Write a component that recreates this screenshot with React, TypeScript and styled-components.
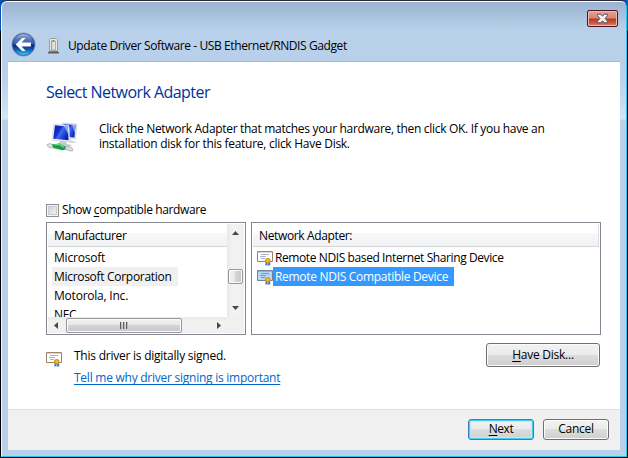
import React from 'react';
import styled, { createGlobalStyle, css } from 'styled-components';

const Global = createGlobalStyle`
  html, body { margin: 0; padding: 0; background: #000; overflow: hidden; }
  * { box-sizing: border-box; }
  #root { font-family: "Open Sans", "Noto Sans", sans-serif; font-size: 12px; line-height: 18px; color: #000; }
  svg { display: block; }
`;

const Desktop = styled.div`
  width: 628px; height: 458px; padding: 1px;
  background: linear-gradient(#0754b8 0, #0754b8 30px, #000 31px);
`;
const Window = styled.div`
  width: 626px; height: 456px;
  display: flex; flex-direction: column;
  border: 1px solid #fff;
  border-right-color: #27c4ee; border-bottom-color: #27c4ee;
  border-left-color: #f3f8fc;
  border-radius: 6px 6px 0 0;
  padding: 0 6px 6px;
  background: linear-gradient(#9ab3d1 0, #b8d0e8 27px, #b9d0ea 28px, #b9d0ea 72px, #c9def1 105px, #d4e6f6 116px, #b9d0ea 119px);
  box-shadow: 0 -1px 0 #2c2a35;
`;
const Header = styled.header`
  height: 60px; flex: none; margin: 0;
  display: flex; flex-direction: column;
  border-bottom: 1px solid #a5bad7;
`;
const CaptionRow = styled.div`
  height: 27px; display: flex; justify-content: flex-end; padding: 8px 2px 0 0;
`;
const CloseButton = styled.button`
  width: 31px; height: 17px; padding: 0;
  display: flex; align-items: center; justify-content: center;
  border: 1px solid #4d1525; border-radius: 2px;
  box-shadow: inset 0 0 0 1px #f0b9ae;
  background: linear-gradient(#e5a397 0, #d98575 7px, #b83a22 8px, #c65a43 12px, #dc8c78 100%);
`;
const TitleRow = styled.div`
  height: 32px; display: flex; align-items: flex-start; padding: 3px 0 0 3px;
`;
const DeviceSlot = styled.div`margin: 6px 9px 0 12px;`;
const Caption = styled.div`margin-top: 5px;`;

const Text = styled.span<{ $spacing?: number }>`
  white-space: pre; letter-spacing: ${p => p.$spacing ?? -0.3}px;
`;
const Key = styled.span`
  text-decoration: underline; text-decoration-thickness: 1px; text-underline-offset: 2px; text-decoration-skip-ink: none;
`;
const Page = styled.main`
  width: 612px; height: 347px; flex: none; background: #fff;
  padding: 19px 19px 0 38px; display: flex; flex-direction: column;
`;
const Heading = styled.h1`
  margin: 0; height: 22px; font-size: 16px; line-height: 22px; font-weight: 400;
  color: #003399;
`;
const Intro = styled.section`
  display: flex; height: 90px; padding-top: 18px;
`;
const IntroText = styled.div`
  display: flex; flex-direction: column; margin-left: 20px; line-height: 15px;
`;
const Check = styled.label`
  display: flex; align-items: center; height: 18px; gap: 3px; margin-top: 8px;
`;
const Box = styled.span`
  width: 13px; height: 13px; border: 1px solid #8e8f8f; flex: none;
  background: linear-gradient(135deg, #cbcfd5, #f6f6f6);
  box-shadow: inset 0 0 0 1px #f4f4f4, inset 0 0 0 2px #c8cbd0;
`;
const Lists = styled.div`
  display: flex; gap: 5px; height: 113px; margin-top: 3px;
`;
const ListFrame = styled.div<{ $width: number }>`
  width: ${p => p.$width}px; height: 113px; border: 1px solid #828790; padding: 1px;
  display: flex; flex-direction: column; background: #fff;
`;
const Upper = styled.div`display: flex; height: 93px; flex: none;`;
const Column = styled.div`flex: 1; min-width: 0; overflow: hidden;`;
const ColumnHead = styled.div<{ $divider?: boolean }>`
  height: 23px; padding: 3px 0 0 6px; line-height: 18px;
  background: linear-gradient(#fff 0, #fff 9px, #f7f8fa 9px, #f1f2f4 100%);
  border-bottom: 1px solid #d5d5d5;
  ${p => p.$divider && css`border-right: 1px solid #dedfe1;`}
`;
const Rows = styled.div`padding: 1px 0 0 4px;`;
const Row = styled.div<{ $shaded?: boolean }>`
  height: 19px; width: 126px; padding-left: 2px; line-height: 19px;
  background: ${p => (p.$shaded ? '#f0f0f0' : 'transparent')};
`;
const DeviceRow = styled.div`
  height: 19px; display: flex; align-items: center;
`;
const DeviceName = styled.div<{ $selected?: boolean }>`
  height: 19px; line-height: 19px; padding: 0 6px 0 2px;
  ${p => p.$selected && css`
    background: #3399ff; color: #fff; outline: 1px dotted #c77826; outline-offset: -1px; width: 181px;
  `}
`;
const VBar = styled.div`
  width: 17px; height: 93px; flex: none; background: linear-gradient(90deg, #e9e9e9, #f2f2f2 30%, #f0f0f0);
  display: flex; flex-direction: column; align-items: center;
`;
const HBar = styled.div`
  height: 16px; width: 179px; background: linear-gradient(#e9e9e9, #f2f2f2 30%, #f0f0f0);
  display: flex; align-items: center;
`;
const LowerBar = styled.div`height: 16px; background: #f0f0f0;`;
const Arrow = styled.div<{ $w: number; $h: number; $lead?: number }>`
  width: ${p => p.$w}px; height: ${p => p.$h}px; flex: none;
  margin-left: ${p => p.$lead ?? 0}px;
  display: flex; align-items: center; justify-content: center;
`;
const VThumb = styled.div`
  width: 15px; height: 15px; margin-top: 28px; margin-bottom: 15px; flex: none; border: 1px solid #979797; border-radius: 2px;
  box-shadow: inset 0 0 0 1px #fafafa;
  background: linear-gradient(90deg, #f3f3f3 0, #e6e6e7 50%, #d3d4d7 50%, #c6c7ca 100%);
`;
const HThumb = styled.div`
  width: 116px; height: 15px; margin-left: 2px; border: 1px solid #979797; border-radius: 2px;
  display: flex; align-items: center; justify-content: center; gap: 1px;
  box-shadow: inset 0 0 0 1px #fafafa;
  background: linear-gradient(#f3f3f3 0, #e6e6e7 50%, #d3d4d7 50%, #c6c7ca 100%);
`;
const Grip = styled.i`
  width: 2px; height: 7px; background: linear-gradient(90deg, #5c5d60 50%, #b8b8ba 50%);
`;
const Signing = styled.section`
  display: flex; justify-content: space-between; align-items: flex-start; padding: 8px 1px 0 0;
`;
const SignInfo = styled.div`display: flex;`;
const SignIcon = styled.div`width: 28px; padding-top: 8px;`;
const SignText = styled.div`display: flex; flex-direction: column; gap: 4px; padding-top: 4px;`;
const Link = styled.a`
  color: #0066cc; height: 18px; text-decoration: underline; text-decoration-thickness: 1px; text-underline-offset: 2px; text-decoration-skip-ink: none;
`;
const Button = styled.button<{ $width: number; $height: number; $primary?: boolean }>`
  width: ${p => p.$width}px; height: ${p => p.$height}px; padding: 0 0 1px;
  font: inherit; line-height: 18px; color: #000; border-radius: 3px;
  border: 1px solid ${p => (p.$primary ? '#3c7fb1' : '#707070')};
  box-shadow: ${p => (p.$primary ? 'inset 0 0 0 1px #43cdf2, inset 0 0 1px 2px #bdebf8' : 'inset 0 0 0 1px #fbfbfb')};
  background: linear-gradient(#f2f2f2 0, #ebebeb 49%, #dddddd 50%, #cfcfcf 100%);
`;
const Footer = styled.footer`
  height: 41px; flex: none; background: #f0f0f0; border-top: 1px solid #dfdfdf;
  display: flex; justify-content: flex-end; gap: 9px; padding: 9px 11px 0 0;
`;

const CloseGlyph = () => (
  <svg width="13" height="11" viewBox="0 0 13 11">
    <path d="M1.5 1.2h3.2l1.8 2 1.8-2h3.2v1.5L9 5.5l2.5 2.8v1.5H8.3l-1.8-2-1.8 2H1.5V8.3L4 5.5 1.5 2.7z" fill="#f2f2f2" stroke="#535569" strokeWidth="1" />
  </svg>
);

const BackIcon = () => (
  <svg width="25" height="25" viewBox="0 0 25 25">
    <defs>
      <linearGradient id="orbTop" x1="0" y1="0" x2="0" y2="1">
        <stop offset="0" stopColor="#a9bddd" /><stop offset=".25" stopColor="#5779bd" />
        <stop offset=".49" stopColor="#3359aa" /><stop offset=".51" stopColor="#03246f" />
        <stop offset=".72" stopColor="#0a5ab5" /><stop offset="1" stopColor="#46d0ff" />
      </linearGradient>
    </defs>
    <circle cx="12.5" cy="12.5" r="12" fill="#8499b9" />
    <circle cx="12.5" cy="12.5" r="11.4" fill="#c3d5ea" />
    <circle cx="12.5" cy="12.5" r="11" fill="url(#orbTop)" stroke="#20458c" strokeWidth=".8" />
    <path d="M4.6 12.5l6.5-6.4h3.6l-4.2 4.5h9.4v3.8h-9.4l4.2 4.5h-3.6z" fill="#fff" />
  </svg>
);

const DeviceIcon = () => (
  <svg width="11" height="16" viewBox="0 0 11 16">
    <path d="M1.5 1.5l1-1h6l1 1V13h-8z" fill="#e8e8e4" stroke="#9b9d9b" />
    <path d="M3.5 3h3.8v9H3.5z" fill="#f7f7f5" stroke="#8a8c8a" strokeWidth=".8" />
    <path d="M5 2v9" stroke="#c2cbbb" />
    <circle cx="5.2" cy="3" r="1" fill="#52a33a" />
    <path d="M1 13h9v1H1z" fill="#777" /><path d="M0 14h11v1.5H0z" fill="#5d5e5e" />
  </svg>
);

const NetworkIcon = () => (
  <svg width="33" height="32" viewBox="0 0 33 32">
    <defs>
      <linearGradient id="screen" x1="0" y1="0" x2="1" y2=".6">
        <stop offset="0" stopColor="#0c20a8" /><stop offset=".45" stopColor="#1531cf" />
        <stop offset=".55" stopColor="#3e6cf0" /><stop offset="1" stopColor="#0b22b8" />
      </linearGradient>
    </defs>
    <path d="M22 19l5 1 4 1-4 1-6-1z" fill="#cfd3d6" />
    <path d="M16 2l15 1-1.5 15L17 17z" fill="#e3e7ef" stroke="#b7c0d0" strokeWidth=".5" />
    <path d="M17.5 3.2l12.2.8-1.3 12.5-10-1z" fill="url(#screen)" />
    <path d="M26 3.8l3.7.2-.8 8z" fill="#b0cbf9" opacity=".7" />
    <path d="M14 20h6l1 3 5 1-3 2-11-2z" fill="#c7cbd0" />
    <path d="M8 3l15 1.5L24 21 6 19z" fill="#edf0f5" stroke="#bcc4d2" strokeWidth=".5" />
    <path d="M9 4.3l12.8 1.3.8 13.7L7.3 17.7z" fill="url(#screen)" />
    <path d="M18 5.3l3.8.3.6 8z" fill="#b0cbf9" opacity=".7" />
    <path d="M1 23.5q3-2 6 .2l6 .7-1.5 3.8-6-1.4Q1.5 27 1 23.5z" fill="#dfe3e3" stroke="#959e9e" strokeWidth=".6" />
    <path d="M6 23.6l7-1.2 7 3.3 1.5 2.5-5.5 1-9-2.8z" fill="#159c45" />
    <path d="M8 24l5-.6 5 2.7" stroke="#6bdc87" strokeWidth="1.2" fill="none" />
    <path d="M20 25.5l5 .5q2.2 1.2 1.5 4l-3.5-.2-4-1.6z" fill="#d8dddd" stroke="#959e9e" strokeWidth=".6" />
  </svg>
);

const Certificate = ({ tinted = false }: { tinted?: boolean }) => (
  <svg width="16" height="16" viewBox="0 0 16 16">
    <path d="M.5 1.5h15v10H.5z" fill={tinted ? '#b7d8f6' : '#fff'} stroke={tinted ? '#6a869b' : '#9b8467'} />
    <path d="M1 2.5h14" stroke={tinted ? '#92b5d2' : '#e2d8c8'} strokeWidth="1" />
    <path d="M4 4.5h8M3 6.5h6M4 8.5h4" stroke={tinted ? '#6a9bd5' : '#a5b1d6'} />
    <path d="M8.5 12h2v4l-1-1-1 .7zM11.2 12h2v3.7l-1-.7-1 1z" fill="#2868d8" />
    <circle cx="10.7" cy="10.7" r="2.8" fill="#d79a16" />
    <circle cx="10.7" cy="10.5" r="1.2" fill="#f3c343" />
  </svg>
);

const paths = { up: 'M0 4L3.5 0 7 4z', down: 'M0 0h7L3.5 4z', left: 'M4 0v7L0 3.5z', right: 'M0 0l4 3.5L0 7z' };
const Triangle = ({ dir }: { dir: keyof typeof paths }) => {
  const vertical = dir === 'up' || dir === 'down';
  return (
    <svg width={vertical ? 7 : 4} height={vertical ? 4 : 7}>
      <path d={paths[dir]} fill="#45474b" />
    </svg>
  );
};

export default function App() {
  return (
    <>
      <Global />
      <Desktop>
        <Window>
          <Header>
            <CaptionRow><CloseButton aria-label="Close"><CloseGlyph /></CloseButton></CaptionRow>
            <TitleRow>
              <BackIcon />
              <DeviceSlot><DeviceIcon /></DeviceSlot>
              <Caption><Text $spacing={-0.4}>Update Driver Software - USB Ethernet/RNDIS Gadget</Text></Caption>
            </TitleRow>
          </Header>
          <Page>
            <Heading><Text $spacing={-0.55}>Select Network Adapter</Text></Heading>
            <Intro>
              <NetworkIcon />
              <IntroText>
                <Text $spacing={-0.31}>Click the Network Adapter that matches your hardware, then click OK. If you have an</Text>
                <Text $spacing={-0.28}>installation disk for this feature, click Have Disk.</Text>
              </IntroText>
            </Intro>
            <Check><Box /><Text $spacing={-0.37}>Show <Key>c</Key>ompatible hardware</Text></Check>
            <Lists>
              <ListFrame $width={200}>
                <Upper>
                  <Column>
                    <ColumnHead><Text $spacing={-0.36}>Manufacturer</Text></ColumnHead>
                    <Rows>
                      <Row><Text $spacing={-0.2}>Microsoft</Text></Row>
                      <Row $shaded><Text>Microsoft Corporation</Text></Row>
                      <Row><Text $spacing={-0.22}>Motorola, Inc.</Text></Row>
                      <Row><Text>NEC</Text></Row>
                    </Rows>
                  </Column>
                  <VBar>
                    <Arrow $w={17} $h={17}><Triangle dir="up" /></Arrow>
                    <VThumb />
                    <Arrow $w={17} $h={17}><Triangle dir="down" /></Arrow>
                  </VBar>
                </Upper>
                <LowerBar>
                  <HBar>
                    <Arrow $w={16} $h={16}><Triangle dir="left" /></Arrow>
                    <HThumb><Grip /><Grip /><Grip /></HThumb>
                    <Arrow $w={17} $h={16} $lead={28}><Triangle dir="right" /></Arrow>
                  </HBar>
                </LowerBar>
              </ListFrame>
              <ListFrame $width={350}>
                <ColumnHead $divider><Text $spacing={-0.36}>Network Adapter:</Text></ColumnHead>
                <Rows>
                  <DeviceRow><Certificate /><DeviceName><Text $spacing={-0.4}>Remote NDIS based Internet Sharing Device</Text></DeviceName></DeviceRow>
                  <DeviceRow><Certificate tinted /><DeviceName $selected><Text>Remote NDIS Compatible Device</Text></DeviceName></DeviceRow>
                </Rows>
              </ListFrame>
            </Lists>
            <Signing>
              <SignInfo>
                <SignIcon><Certificate /></SignIcon>
                <SignText>
                  <Text $spacing={-0.24}>This driver is digitally signed.</Text>
                  <Link><Text $spacing={-0.25}>Tell me why driver signing is important</Text></Link>
                </SignText>
              </SignInfo>
              <Button $width={114} $height={24}><Text $spacing={-0.25}><Key>H</Key>ave Disk...</Text></Button>
            </Signing>
          </Page>
          <Footer>
            <Button $width={66} $height={21} $primary><Text $spacing={-0.45}><Key>N</Key>ext</Text></Button>
            <Button $width={66} $height={21}><Text $spacing={-0.25}>Cancel</Text></Button>
          </Footer>
        </Window>
      </Desktop>
    </>
  );
}
